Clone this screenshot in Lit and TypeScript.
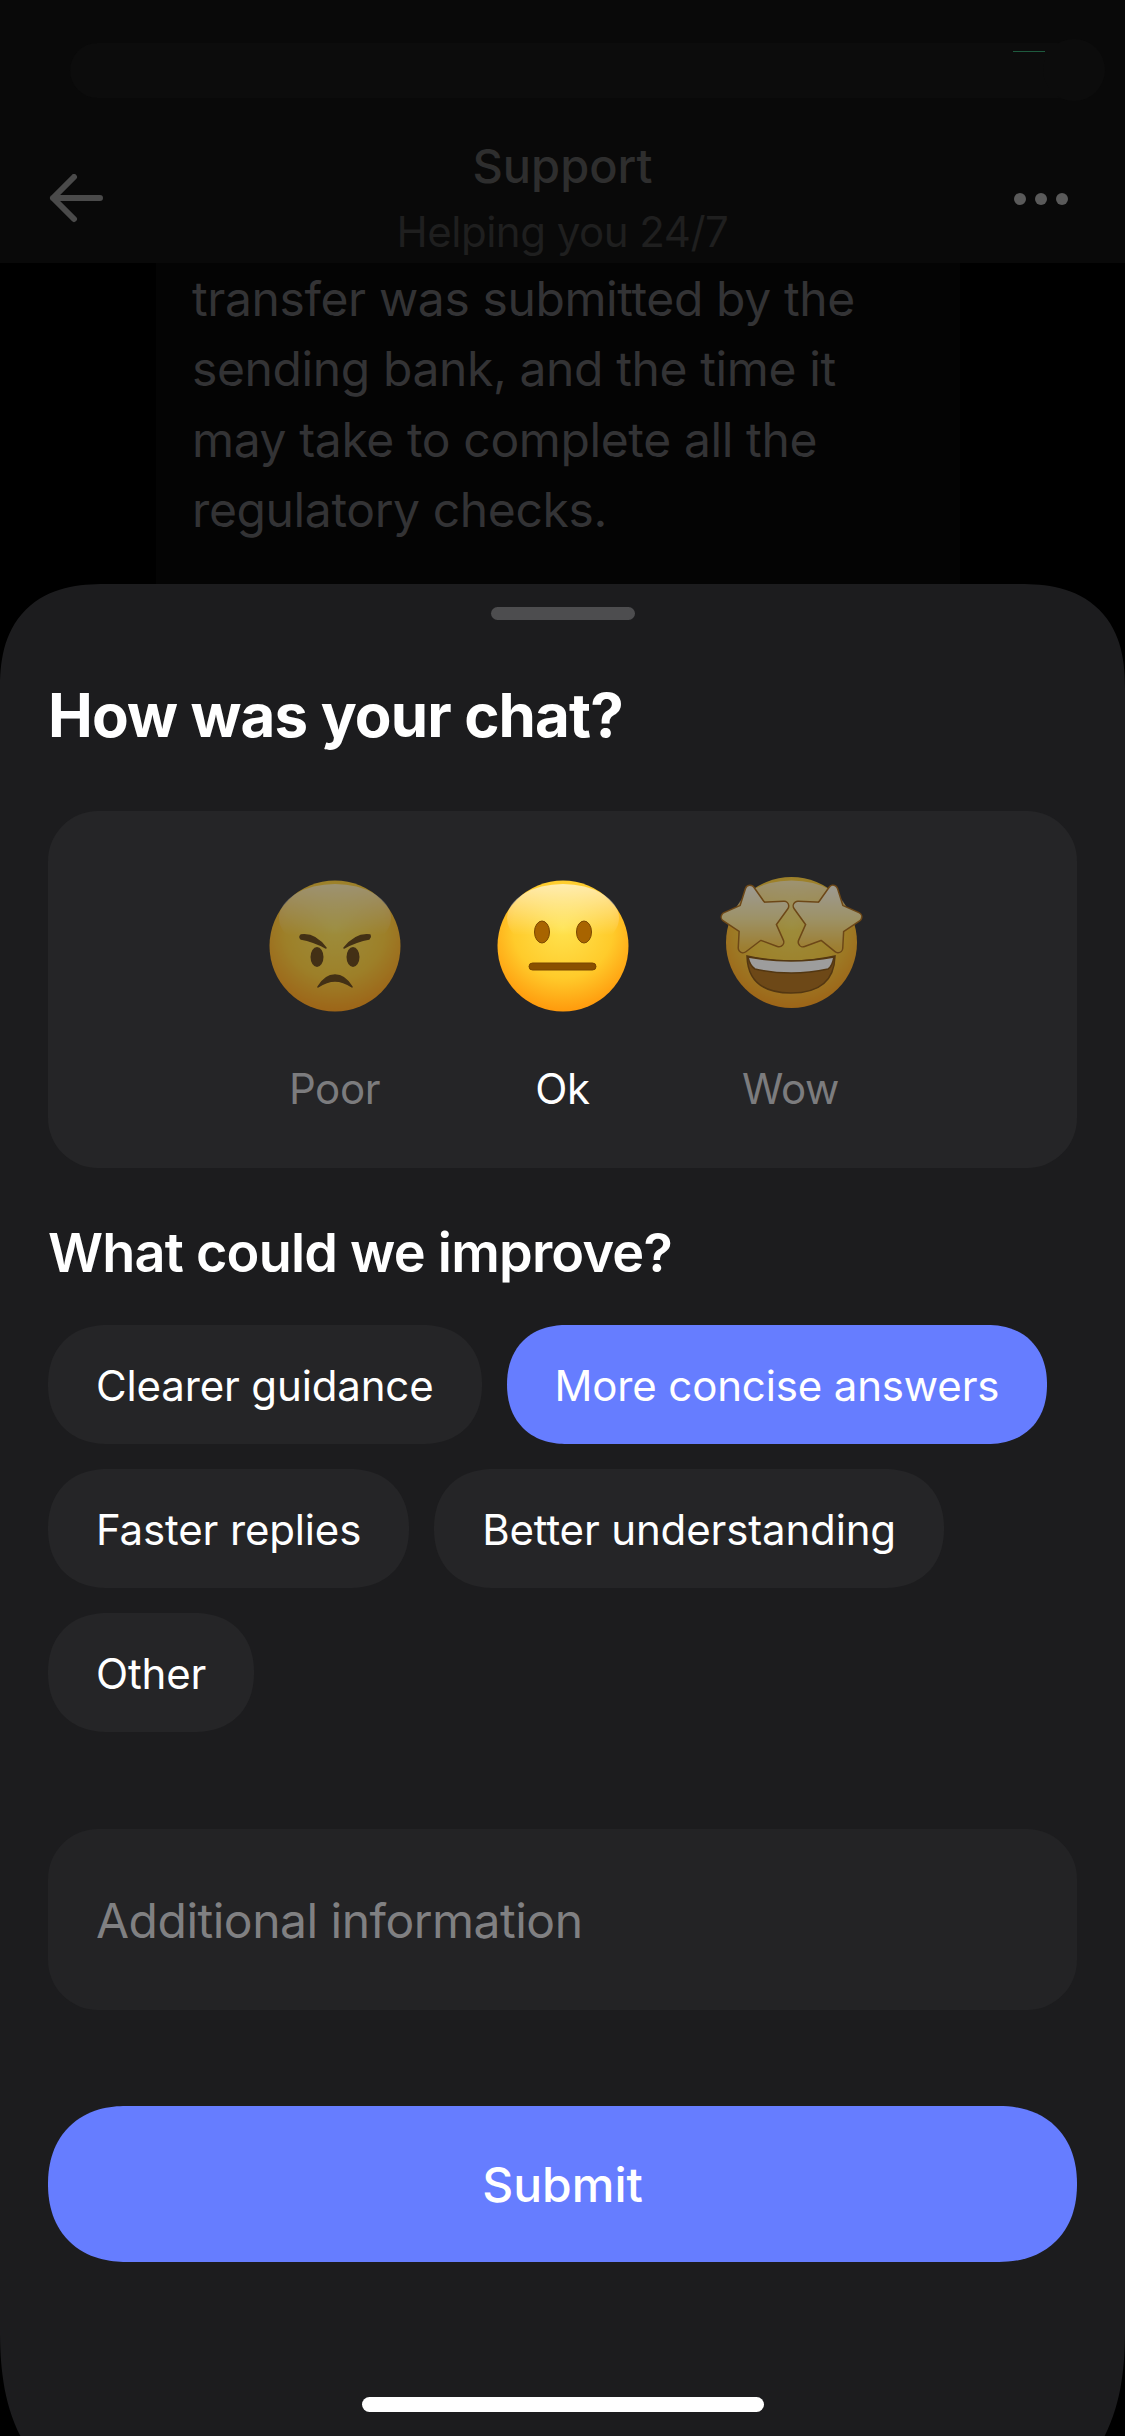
import { LitElement, html, css, svg } from "lit";
import { customElement, state } from "lit/decorators.js";

const defs = svg`
  <defs>
    <radialGradient id="face" cx="50%" cy="36%" r="66%">
      <stop offset="0%" stop-color="#ffe34f"/>
      <stop offset="58%" stop-color="#ffcb2b"/>
      <stop offset="100%" stop-color="#ff960a"/>
    </radialGradient>
    <linearGradient id="shine" x1="0" y1="0" x2="0" y2="1">
      <stop offset="0%" stop-color="#fff" stop-opacity=".62"/>
      <stop offset="75%" stop-color="#fff" stop-opacity="0"/>
    </linearGradient>
    <linearGradient id="star" x1="0" y1="0" x2="0" y2="1">
      <stop offset="0%" stop-color="#fff8e0"/>
      <stop offset="50%" stop-color="#ffeb9a"/>
      <stop offset="100%" stop-color="#ffc83a"/>
    </linearGradient>
  </defs>`;

const faceAt = (cx: number, cy: number) => svg`
  <circle cx=${cx} cy=${cy} r="65.5" fill="url(#face)"/>
  <ellipse cx=${cx} cy=${cy - 28} rx="56" ry="34" fill="url(#shine)"/>`;

const STAR_L = "M49 30 L61 47 L83 46 L70 64 L78 82 L59 75 L42 88 L43 69 L25 57 L43 49Z";
const STAR_R = "M132 30 L138 49 L156 57 L138 69 L137 88 L121 75 L102 82 L110 64 L97 46 L120 47Z";

const EMOJI: Record<string, unknown> = {
  Poor: svg`${defs}${faceAt(90, 80)}
    <path d="M56 69 Q70 67 81 82 Q68 75 56 73 Q54 71 56 69Z" fill="#5c3a08" stroke="#5c3a08" stroke-width="1.5" stroke-linejoin="round"/>
    <path d="M125 69 Q111 67 99 82 Q112 75 124 73 Q126 71 125 69Z" fill="#5c3a08" stroke="#5c3a08" stroke-width="1.5" stroke-linejoin="round"/>
    <ellipse cx="72" cy="91" rx="6.5" ry="10" fill="#5c3a08"/>
    <ellipse cx="108" cy="91" rx="6.5" ry="10" fill="#5c3a08"/>
    <path d="M73 121 Q80 109 90 109 Q100 109 107 121 Q98 115 90 115 Q82 115 73 121Z" fill="#5c3a08" stroke="#5c3a08" stroke-width="1.5" stroke-linejoin="round"/>`,
  Ok: svg`${defs}${faceAt(90, 80)}
    <ellipse cx="69" cy="66" rx="7.5" ry="11" fill="#a86400" stroke="#7a4600" stroke-width="1"/>
    <ellipse cx="111" cy="66" rx="7.5" ry="11" fill="#a86400" stroke="#7a4600" stroke-width="1"/>
    <rect x="56" y="97" width="67" height="7" rx="3.5" fill="#8a5000" stroke="#7a4600" stroke-width="1"/>`,
  Wow: svg`${defs}<g transform="translate(0 -6)">${faceAt(90.5, 82.5)}
    <path d="M46 96 Q90 106 134 96 Q133 133 90 133 Q47 133 46 96Z" fill="#a9660b" stroke="#7a4600" stroke-width="1.5"/>
    <path d="M47 97 Q90 105 133 97 Q131 107 127 109 Q90 117 54 109 Q49 106 47 97Z" fill="#fff" stroke="#7a4600" stroke-width="1.5"/>
    <path d=${STAR_L} fill="#a8640a" stroke="#a8640a" stroke-width="11" stroke-linejoin="round"/>
    <path d=${STAR_R} fill="#a8640a" stroke="#a8640a" stroke-width="11" stroke-linejoin="round"/>
    <path d=${STAR_L} fill="url(#star)" stroke="url(#star)" stroke-width="8" stroke-linejoin="round"/>
    <path d=${STAR_R} fill="url(#star)" stroke="url(#star)" stroke-width="8" stroke-linejoin="round"/>
  </g>`,
};

const RATINGS = ["Poor", "Ok", "Wow"];
const CHIPS = [
  "Clearer guidance",
  "More concise answers",
  "Faster replies",
  "Better understanding",
  "Other",
];

@customElement("app-root")
export class AppRoot extends LitElement {
  @state() rating = "Ok";
  @state() chip = "More concise answers";

  static styles = css`
    :host {
      display: block;
      position: relative;
      width: 1125px;
      height: 2436px;
      overflow: hidden;
      background: #000;
      font-family: "Inter", "Liberation Sans", sans-serif;
      color: #fff;
    }
    * { box-sizing: border-box; }
    .top {
      height: 263px;
      padding-top: 43px;
      background: #090909;
    }
    .status {
      position: relative;
      height: 55px;
      margin: 0 20px 0 70px;
      border-radius: 28px;
      background: #0c0c0c;
    }
    .status::after {
      content: "";
      position: absolute;
      right: 0;
      top: -4px;
      width: 62px;
      height: 62px;
      border-radius: 50%;
      background: #0c0c0c;
    }
    .status::before {
      content: "";
      position: absolute;
      right: 60px;
      top: 8px;
      width: 32px;
      height: 1px;
      background: #1e5a3e;
    }
    .nav {
      display: grid;
      grid-template-columns: 1fr auto 1fr;
      align-items: center;
      margin-top: 40px;
      padding: 0 48px;
    }
    .nav svg { display: block; }
    .dots { justify-self: end; margin-right: 9px; }
    .titles { text-align: center; }
    .t1 { font-size: 47px; line-height: 56px; font-weight: 500; color: #2e2e2e; }
    .t2 { font-size: 42px; line-height: 56px; margin-top: 10px; color: #1f1f1f; letter-spacing: -0.5px; }
    .bubble {
      width: 804px;
      height: 340px;
      margin-left: 156px;
      padding: 1px 36px;
      background: #040404;
      color: #333335;
      font-size: 48px;
      letter-spacing: -0.38px;
      line-height: 70.4px;
    }
    .sheet {
      position: absolute;
      left: 0;
      right: 0;
      top: 584px;
      height: 1933px;
      padding: 23px 48px 0;
      background: #1c1c1e;
      border-radius: 105px 105px 187px 187px;
      corner-shape: superellipse(1.3);
    }
    .handle {
      width: 144px;
      height: 13px;
      margin: 0 auto;
      border-radius: 7px;
      background: #4d4d4f;
    }
    h1 {
      margin: 57px 0 0;
      font-size: 60px;
      letter-spacing: -0.86px;
      line-height: 76px;
      font-weight: 700;
    }
    .card {
      height: 357px;
      margin-top: 58px;
      padding-top: 55px;
      display: grid;
      grid-template-columns: repeat(3, 228px);
      justify-content: center;
      background: #252527;
      border-radius: 50px;
    }
    .rate {
      display: flex;
      flex-direction: column;
      align-items: center;
      padding: 0;
      border: 0;
      background: none;
      font: inherit;
      color: #7c7c7e;
      cursor: pointer;
    }
    .rate svg { display: block; opacity: .55; }
    .rate.on svg { opacity: 1; }
    .rate.on { color: #fff; }
    .rate span { margin-top: 38px; font-size: 42px; letter-spacing: -0.4px; line-height: 50px; }
    h2 {
      margin: 50px 0 0;
      font-size: 54px;
      letter-spacing: -0.78px;
      line-height: 70px;
      font-weight: 600;
    }
    .chips {
      display: flex;
      flex-wrap: wrap;
      gap: 25px;
      margin-top: 37px;
    }
    .chip {
      height: 119px;
      padding: 2px 48px 0;
      border: 0;
      border-radius: 60px;
      corner-shape: superellipse(1.15);
      background: #252527;
      color: #fff;
      font: inherit;
      font-size: 42px;
      letter-spacing: -0.15px;
      cursor: pointer;
    }
    .chip.on { background: #667dff; }
    input {
      display: block;
      width: 100%;
      height: 181px;
      margin-top: 97px;
      padding: 2px 48px 0;
      border: 0;
      outline: 0;
      border-radius: 50px;
      background: #232325;
      color: #fff;
      font: inherit;
      font-size: 48px;
      letter-spacing: -0.5px;
    }
    input::placeholder { color: #808082; opacity: 1; }
    .submit {
      display: block;
      width: 100%;
      height: 156px;
      margin-top: 96px;
      border: 0;
      border-radius: 78px;
      corner-shape: superellipse(1.15);
      background: #667dff;
      color: #fff;
      font: inherit;
      font-size: 48px;
      font-weight: 450;
      cursor: pointer;
    }
    .home {
      width: 402px;
      height: 15px;
      margin: 135px auto 0;
      border-radius: 8px;
      background: #fff;
    }
  `;

  render() {
    return html`
      <div class="top">
        <div class="status"></div>
        <div class="nav">
          <svg width="60" height="50" viewBox="0 0 60 50" fill="none" stroke="#4a4a4a" stroke-width="6" stroke-linecap="round" stroke-linejoin="round">
            <path d="M5 24H52M26 3L5 24L26 45"/>
          </svg>
          <div class="titles">
            <div class="t1">Support</div>
            <div class="t2">Helping you 24/7</div>
          </div>
          <svg class="dots" width="54" height="12" viewBox="0 0 54 12" fill="#5a5a5a">
            <circle cx="6" cy="6" r="6"/><circle cx="27" cy="6" r="6"/><circle cx="48" cy="6" r="6"/>
          </svg>
        </div>
      </div>
      <div class="bubble">
        transfer was submitted by the<br />
        sending bank, and the time it<br />
        may take to complete all the<br />
        regulatory checks.
      </div>
      <div class="sheet">
        <div class="handle"></div>
        <h1>How was your chat?</h1>
        <div class="card">
          ${RATINGS.map(
            (r) => html`
              <button class="rate ${r === this.rating ? "on" : ""}" @click=${() => (this.rating = r)}>
                <svg width="180" height="160" viewBox="0 0 180 160">${EMOJI[r]}</svg>
                <span>${r}</span>
              </button>
            `
          )}
        </div>
        <h2>What could we improve?</h2>
        <div class="chips">
          ${CHIPS.map(
            (c) => html`
              <button class="chip ${c === this.chip ? "on" : ""}" @click=${() => (this.chip = c)}>${c}</button>
            `
          )}
        </div>
        <input placeholder="Additional information" />
        <button class="submit">Submit</button>
        <div class="home"></div>
      </div>
    `;
  }
}
